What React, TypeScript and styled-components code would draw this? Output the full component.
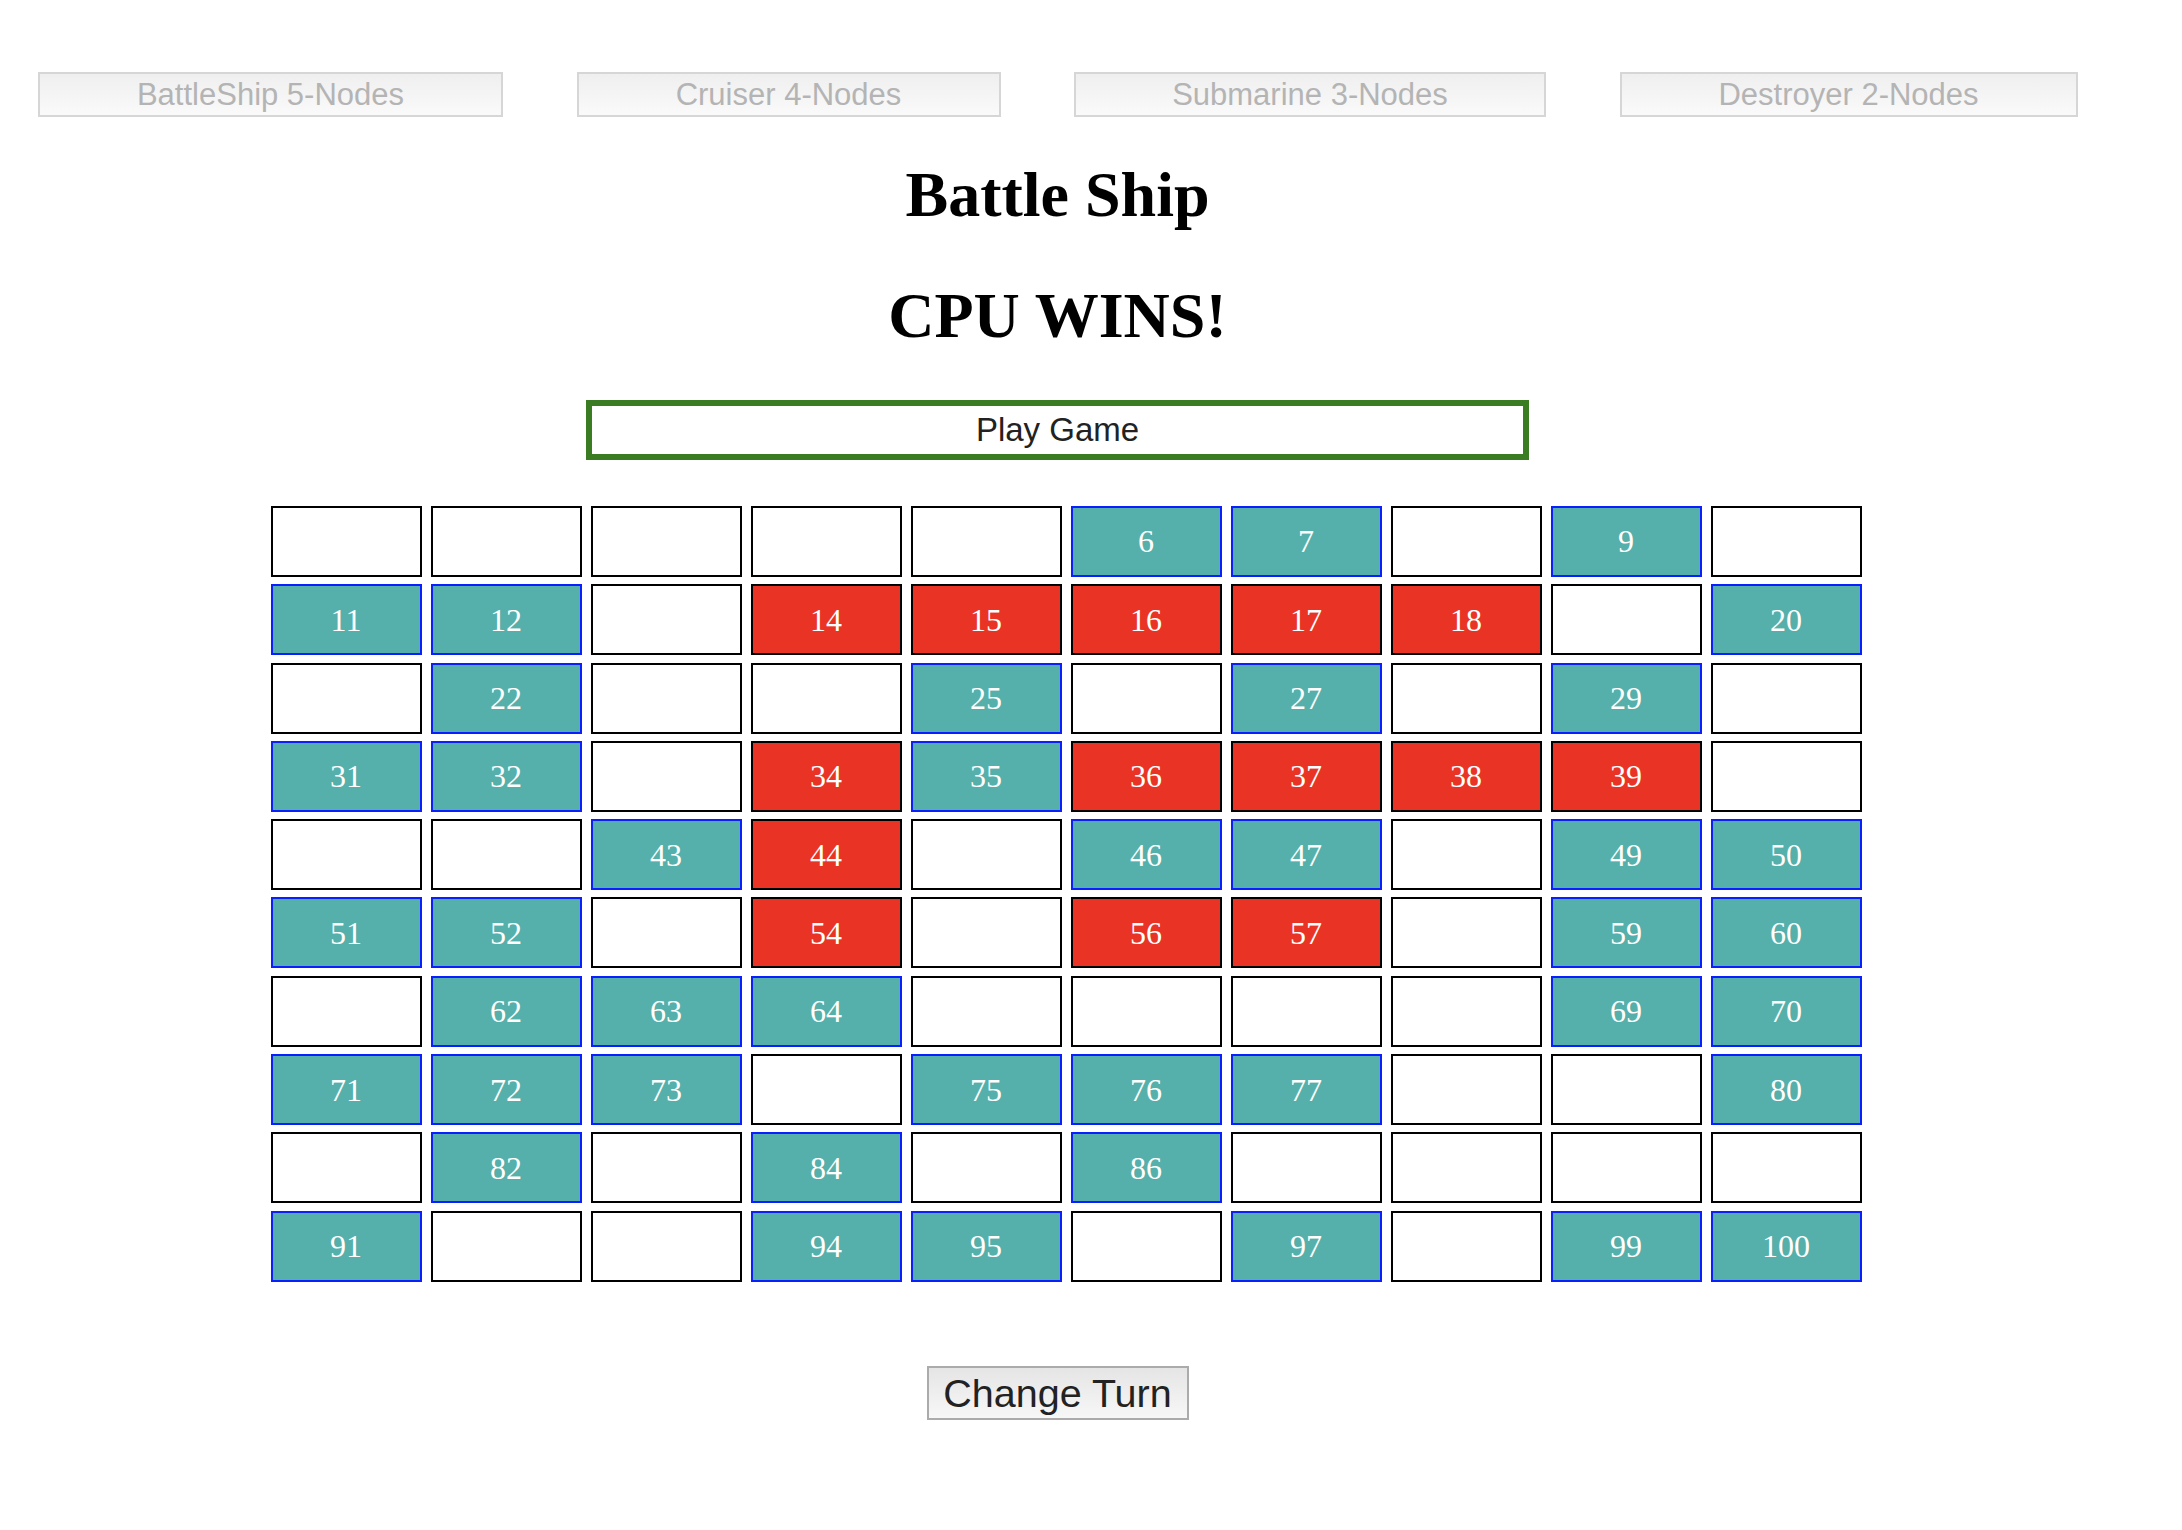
import React from "react";
import styled, { createGlobalStyle } from "styled-components";

const GlobalStyle = createGlobalStyle`
  html, body {
    margin: 0;
    padding: 0;
    background: #ffffff;
  }
  body {
    font-family: "Liberation Serif", "Times New Roman", serif;
  }
`;

const Page = styled.div`
  width: 2115px;
  padding-top: 72px;
  display: flex;
  flex-direction: column;
  align-items: center;
`;

const ShipRow = styled.div`
  align-self: flex-start;
  display: flex;
  gap: 73.5px;
  padding-left: 38px;
  height: 45px;
`;

const ShipButton = styled.button<{ $w: number }>`
  box-sizing: border-box;
  width: ${(p) => p.$w}px;
  height: 45px;
  margin: 0;
  padding: 0;
  border: 2px solid #d6d6d6;
  background: linear-gradient(#efefef, #fafafa);
  color: #b4b4b4;
  font-family: "Liberation Sans", Arial, sans-serif;
  font-size: 31px;
  line-height: 41px;
  text-align: center;
  cursor: default;
`;

const Heading = styled.h1<{ $mt: number }>`
  margin: ${(p) => p.$mt}px 0 0 0;
  font-family: "Liberation Serif", "Times New Roman", serif;
  font-weight: bold;
  font-size: 64px;
  line-height: 74px;
  color: #000;
  text-align: center;
`;

const PlayBox = styled.div`
  box-sizing: border-box;
  margin-top: 46.6px;
  width: 943px;
  height: 60px;
  border: 6px solid #3a7c22;
  display: flex;
  align-items: center;
  justify-content: center;
  font-family: "Liberation Sans", Arial, sans-serif;
  font-size: 33px;
  color: #222;
`;

const Board = styled.div`
  margin-top: 46px;
  padding-left: 17px;
  display: grid;
  grid-template-columns: repeat(10, 151px);
  grid-auto-rows: 71px;
  column-gap: 9px;
  row-gap: 7.3px;
`;

type Kind = "empty" | "ship" | "hit";

const Cell = styled.div<{ $kind: Kind }>`
  box-sizing: border-box;
  display: flex;
  align-items: center;
  justify-content: center;
  border: 2px solid
    ${(p) => (p.$kind === "ship" ? "#0a1fff" : "#000000")};
  background: ${(p) =>
    p.$kind === "ship" ? "#55b0ab" : p.$kind === "hit" ? "#e93425" : "#ffffff"};
  color: #ffffff;
  font-family: "Liberation Serif", "Times New Roman", serif;
  font-size: 32px;
  line-height: 1;
`;

const TurnButton = styled.button`
  box-sizing: border-box;
  margin-top: 84px;
  width: 262px;
  height: 54px;
  padding: 0;
  border: 2px solid #ababab;
  background: linear-gradient(#e5e5e5, #f7f7f7);
  color: #222;
  font-family: "Liberation Sans", Arial, sans-serif;
  font-size: 39.5px;
  line-height: 50px;
  cursor: default;
`;

const ships = [
  { label: "BattleShip 5-Nodes", w: 465 },
  { label: "Cruiser 4-Nodes", w: 424 },
  { label: "Submarine 3-Nodes", w: 472 },
  { label: "Destroyer 2-Nodes", w: 458 },
];

const shipCells = new Set([
  6, 7, 9, 11, 12, 20, 22, 25, 27, 29, 31, 32, 35, 43, 46, 47, 49, 50, 51, 52,
  59, 60, 62, 63, 64, 69, 70, 71, 72, 73, 75, 76, 77, 80, 82, 84, 86, 91, 94,
  95, 97, 99, 100,
]);

const hitCells = new Set([
  14, 15, 16, 17, 18, 34, 36, 37, 38, 39, 44, 54, 56, 57,
]);

export default function App() {
  const cells = Array.from({ length: 100 }, (_, i) => i + 1);
  return (
    <>
      <GlobalStyle />
      <Page>
        <ShipRow>
          {ships.map((s) => (
            <ShipButton key={s.label} $w={s.w}>
              {s.label}
            </ShipButton>
          ))}
        </ShipRow>
        <Heading $mt={41.4}>Battle Ship</Heading>
        <Heading $mt={47}>CPU WINS!</Heading>
        <PlayBox>Play Game</PlayBox>
        <Board>
          {cells.map((n) => {
            const kind: Kind = shipCells.has(n)
              ? "ship"
              : hitCells.has(n)
              ? "hit"
              : "empty";
            return (
              <Cell key={n} $kind={kind}>
                {kind === "empty" ? "" : n}
              </Cell>
            );
          })}
        </Board>
        <TurnButton>Change Turn</TurnButton>
      </Page>
    </>
  );
}
